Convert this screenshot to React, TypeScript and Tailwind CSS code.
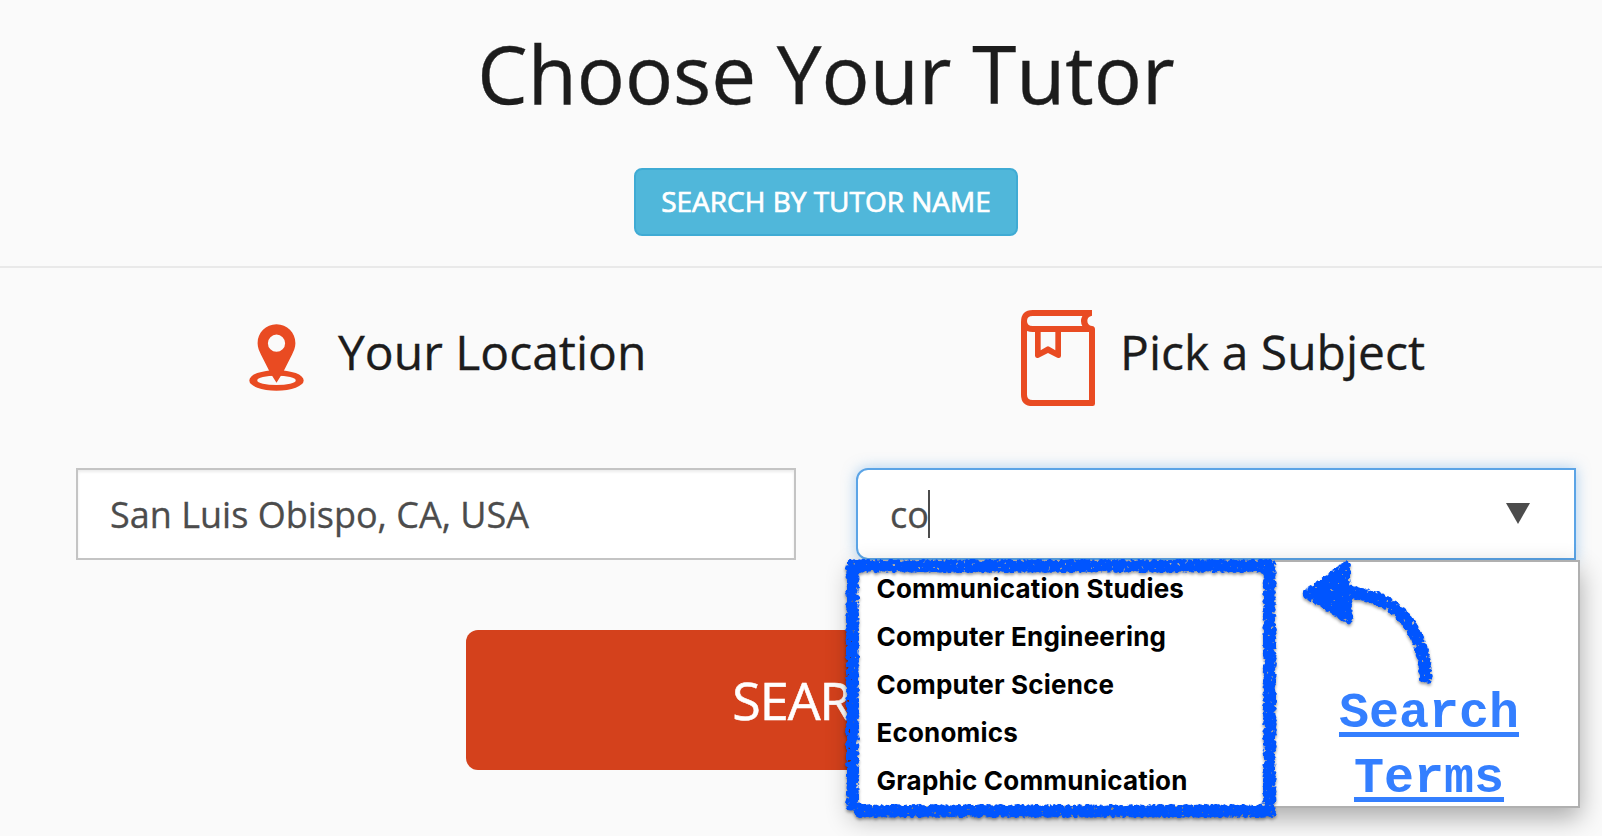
import React from "react";

const subjects = [
  "Communication Studies",
  "Computer Engineering",
  "Computer Science",
  "Economics",
  "Graphic Communication",
];

function PinIcon() {
  return (
    <svg className="h-[67px] w-[55px] shrink-0" viewBox="56 72 164 202" fill="#e94b22" fillRule="evenodd">
      <path d="M56 242a82 31 0 1 0 164 0a82 31 0 1 0-164 0ZM80 242a58 14 0 1 1 116 0a58 14 0 1 1-116 0Z" />
      <path d="M138 73C106 73 81 98 81 130C81 143 86 153 91 164L117 215L128 233L138 249L148 233L159 215L185 164C190 153 195 143 195 130C195 98 170 73 138 73ZM138 104a26 26 0 1 1 0 52a26 26 0 1 1 0-52Z" />
    </svg>
  );
}

function BookIcon() {
  return (
    <svg className="h-[96px] w-[74px] shrink-0" viewBox="63 30 222 288" fill="#e94b22" fillRule="evenodd">
      <path d="M276 30H98Q63 30 63 66V284Q63 318 98 318H278Q285 318 285 311V88Q285 79 276 78Q262 75 262 62Q262 50 276 47ZM98 48H247Q239 63 247 78H98Q81 78 81 63Q81 48 98 48ZM81 93Q88 96 98 96H105V168Q107 176 116 173L144 159L172 173Q182 176 183 168V96H267V300H98Q81 300 81 284ZM122 96H166V151L148 140Q144 138 140 140L122 151Z" />
    </svg>
  );
}

function Annotations() {
  return (
    <svg className="pointer-events-none absolute left-0 top-0 h-[836px] w-[1602px]" viewBox="0 0 1602 836" fill="none">
      <defs>
        <filter id="crayon" filterUnits="userSpaceOnUse" x="830" y="545" width="620" height="291" colorInterpolationFilters="sRGB">
          <feGaussianBlur in="SourceAlpha" stdDeviation="2" result="soft" />
          <feTurbulence type="fractalNoise" baseFrequency="0.27" numOctaves="2" seed="7" result="noise" />
          <feComposite in="soft" in2="noise" operator="arithmetic" k1="2.4" k2="0" k3="0" k4="0" result="mix" />
          <feComponentTransfer in="mix" result="mask">
            <feFuncA type="linear" slope="5" intercept="-2.2" />
          </feComponentTransfer>
          <feFlood floodColor="#0055ff" />
          <feComposite in2="mask" operator="in" result="ink" />
          <feDropShadow in="ink" dx="0" dy="2" stdDeviation="1.5" floodColor="#000000" floodOpacity="0.4" />
        </filter>
      </defs>
      <g filter="url(#crayon)">
        <path d="M847 566H1275M1269.500 561V817M1275 811H855M852.500 561V810" stroke="#0055ff" strokeWidth="12" />
        <path d="M1345 593C1395 592 1426 630 1426 683" stroke="#0055ff" strokeWidth="12" />
        <path d="M1304 594L1347 563L1350 622Z" fill="#0055ff" stroke="#0055ff" strokeWidth="5" strokeLinejoin="round" />
      </g>
    </svg>
  );
}

export default function App() {
  return (
    <main className="relative h-[836px] w-[1602px] overflow-hidden bg-[#fafafa] font-['Open_Sans',sans-serif] text-[#1c1c1c]">
      <header className="flex h-[268px] flex-col items-center border-b-2 border-[#e9e9e9] pl-[50px] pt-[23px]">
        <h1 className="h-[100px] whitespace-nowrap text-[80px] leading-[100px] [-webkit-text-stroke:0.4px_#1c1c1c]">Choose Your Tutor</h1>
        <button className="mt-[45px] flex h-[68px] w-[384px] shrink-0 items-center justify-center whitespace-nowrap rounded-lg border-2 border-[#3fabd4] bg-[#50b7da] pb-[2px] text-[28px] text-white [-webkit-text-stroke:0.7px_white]">
          SEARCH BY TUTOR NAME
        </button>
      </header>

      <section className="grid grid-cols-[720px_720px] gap-x-[60px] pl-[76px]">
        <div className="flex h-[200px] pl-[172.500px]">
          <div className="pt-[56px]"><PinIcon /></div>
          <h2 className="ml-[34.500px] mt-[49px] whitespace-nowrap text-[48px] leading-[70px] [-webkit-text-stroke:0.3px_#1c1c1c]">Your Location</h2>
        </div>
        <div className="flex h-[200px] pl-[165px]">
          <div className="pt-[42px]"><BookIcon /></div>
          <h2 className="ml-[25px] mt-[49px] whitespace-nowrap text-[48px] leading-[70px] [-webkit-text-stroke:0.3px_#1c1c1c]">Pick a Subject</h2>
        </div>
        <div className="flex h-[92px] items-center border-2 border-[#c4c4c4] bg-white pl-[32px] pt-[2px] text-[36px] text-[#4c4c4c] shadow-[inset_0_2px_3px_rgba(0,0,0,0.08)] [-webkit-text-stroke:0.3px_#4c4c4c]">
          <span className="whitespace-nowrap">San Luis Obispo, CA, USA</span>
        </div>
        <div className="flex h-[92px] items-center rounded-l-xl border-2 border-[#5ba4e6] bg-white pl-[32px] pr-[44px] text-[36px] text-[#4c4c4c] shadow-[0_0_14px_rgba(91,164,230,0.5)] [-webkit-text-stroke:0.3px_#4c4c4c]">
          <span className="pt-[2px]">co</span>
          <span className="-ml-px h-[48px] w-[2px] bg-[#4c4c4c]" />
          <svg className="mb-px ml-auto h-[21px] w-[24px]" viewBox="0 0 24 21" fill="#4c4c4c"><path d="M0 0H24L12 21Z" /></svg>
        </div>
      </section>

      <button className="ml-[466px] mt-[70px] block h-[140px] w-[720px] rounded-xl bg-[#d4411c] text-[52px] tracking-[-1px] text-white [-webkit-text-stroke:0.6px_white]">
        SEARCH
      </button>

      <div className="absolute left-[852px] top-[560px] flex h-[248px] w-[728px] border-2 border-[#b0b0b0] bg-white shadow-[0_10px_24px_rgba(0,0,0,0.32)]">
        <ul className="w-[420px] pl-[22.500px] pt-[3px] font-['Inter',sans-serif] text-[26px] font-bold leading-[48px] tracking-[0.18px] text-black">
          {subjects.map((name) => (
            <li key={name} className="h-[48px] whitespace-nowrap">{name}</li>
          ))}
        </ul>
        <p className="ml-[60px] mt-[119px] w-[190px] text-center font-['Liberation_Mono',monospace] text-[50px] font-bold leading-[65px] text-[#347fff] underline decoration-[5px] underline-offset-[5px]">
          Search<br />Terms
        </p>
      </div>
      <Annotations />
    </main>
  );
}
